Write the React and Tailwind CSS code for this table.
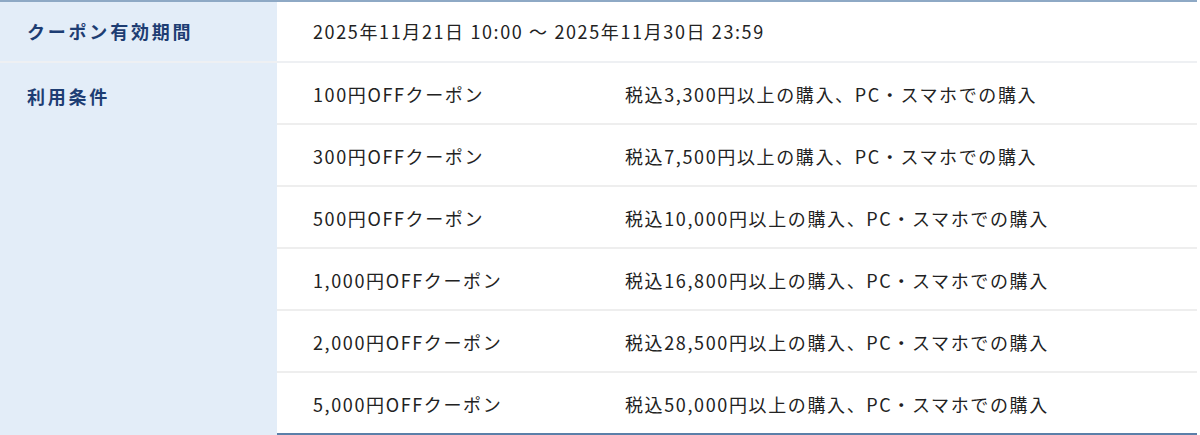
const conditions = [
  ["100円OFFクーポン", "税込3,300円以上の購入、PC・スマホでの購入"],
  ["300円OFFクーポン", "税込7,500円以上の購入、PC・スマホでの購入"],
  ["500円OFFクーポン", "税込10,000円以上の購入、PC・スマホでの購入"],
  ["1,000円OFFクーポン", "税込16,800円以上の購入、PC・スマホでの購入"],
  ["2,000円OFFクーポン", "税込28,500円以上の購入、PC・スマホでの購入"],
  ["5,000円OFFクーポン", "税込50,000円以上の購入、PC・スマホでの購入"],
];

export default function App() {
  return (
    <div className="bg-white font-['Noto_Sans_CJK_JP',sans-serif] text-[18px] text-[#222]">
      <div className="w-[1197px] border-t-2 border-[#8ea9c5]">
        {/* 有効期間 */}
        <div className="flex border-b-2 border-[#eef0f3]">
          <div className="w-[277px] shrink-0 bg-[#e3edf8] pl-[27px] h-[59px] flex items-center font-bold text-[#1d3d73] tracking-[0.155em]">
            クーポン有効期間
          </div>
          <div className="flex-1 pl-[36px] flex items-center tracking-[0.09em]">
            2025年11月21日 10:00 〜 2025年11月30日 23:59
          </div>
        </div>

        {/* 利用条件 */}
        <div className="flex">
          <div className="w-[277px] shrink-0 bg-[#e3edf8] pl-[27px] pt-[20px] font-bold text-[#1d3d73] tracking-[0.155em]">
            利用条件
          </div>
          <div className="flex-1 border-b-2 border-[#5b7fa9]">
            {conditions.map(([name, rule], i) => (
              <div
                key={name}
                className={
                  "flex items-center pt-[2px] pl-[36px] tracking-[0.09em] " +
                  (i < conditions.length - 1 ? "h-[62px] border-b-2 border-[#eeeeee]" : "h-[60px]")
                }
              >
                <div className="w-[312px] shrink-0">{name}</div>
                <div>{rule}</div>
              </div>
            ))}
          </div>
        </div>
      </div>
    </div>
  );
}
